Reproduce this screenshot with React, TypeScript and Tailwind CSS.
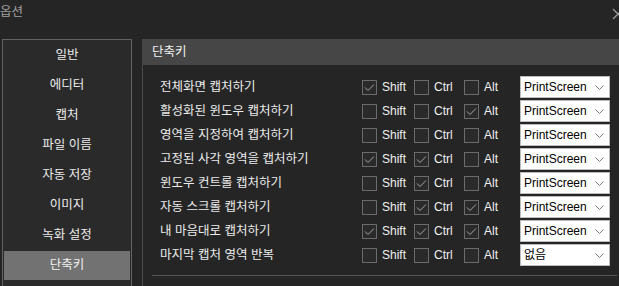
import React from 'react';

const menu = ['일반', '에디터', '캡처', '파일 이름', '자동 저장', '이미지', '녹화 설정', '단축키'];

type Row = { label: string; shift: boolean; ctrl: boolean; alt: boolean; key: string };

const rows: Row[] = [
  { label: '전체화면 캡처하기', shift: true, ctrl: false, alt: false, key: 'PrintScreen' },
  { label: '활성화된 윈도우 캡처하기', shift: false, ctrl: false, alt: true, key: 'PrintScreen' },
  { label: '영역을 지정하여 캡처하기', shift: false, ctrl: false, alt: false, key: 'PrintScreen' },
  { label: '고정된 사각 영역을 캡처하기', shift: true, ctrl: true, alt: false, key: 'PrintScreen' },
  { label: '윈도우 컨트롤 캡처하기', shift: false, ctrl: true, alt: false, key: 'PrintScreen' },
  { label: '자동 스크롤 캡처하기', shift: false, ctrl: true, alt: true, key: 'PrintScreen' },
  { label: '내 마음대로 캡처하기', shift: true, ctrl: true, alt: true, key: 'PrintScreen' },
  { label: '마지막 캡처 영역 반복', shift: false, ctrl: false, alt: false, key: '없음' },
];

function Check({ checked, label, width }: { checked: boolean; label: string; width: string }) {
  return (
    <div className={`flex items-center gap-[5px] ${width}`}>
      <div className="w-[15px] h-[15px] border border-[#6b6b6b] bg-[#2a2a2a] flex items-center justify-center">
        {checked && (
          <svg width="11" height="9" viewBox="0 0 11 9">
            <path d="M1 4.5 L4 7.5 L10 1.5" stroke="#a8a8a8" strokeWidth="1" fill="none" />
          </svg>
        )}
      </div>
      <span className="text-[#f0f0f0]">{label}</span>
    </div>
  );
}

export default function App() {
  return (
    <div className="w-[619px] h-[286px] bg-[#252525] overflow-hidden relative text-[12px] font-['Liberation_Sans','Noto_Sans_CJK_KR',sans-serif]">
      <div className="h-[39px] pt-[3px] text-[#a0a0a0] text-[12.5px] leading-[18px]">옵션</div>
      <svg className="absolute left-[612px] top-[8px]" width="12" height="12" viewBox="0 0 12 12">
        <path d="M1 1 L11 11 M11 1 L1 11" stroke="#9a9a9a" strokeWidth="1.3" fill="none" />
      </svg>

      <div className="flex pl-[2px]">
        <div className="w-[130px] h-[260px] border border-[#626262] bg-[#2a2a2a] p-px flex flex-col gap-px text-[12.5px]">
          {menu.map((m, i) => (
            <div
              key={m}
              className={`h-[29px] flex items-center justify-center ${i === menu.length - 1 ? 'bg-[#727272] text-[#f0f0f0]' : 'text-[#ececec]'}`}
            >
              {m}
            </div>
          ))}
        </div>

        <div className="ml-[10px] flex-1 flex flex-col">
          <div className="h-[26px] bg-[#464646] flex items-center pl-[10px] text-[#f2f2f2] text-[12.5px]">단축키</div>
          <div className="flex-1 border-l border-[#4a4a4a] pt-[10px] pl-[17px] flex flex-col">
            {rows.map((r) => (
              <div key={r.label} className="h-[24px] flex items-center">
                <div className="w-[202px] text-[#ececec] text-[12.5px]">{r.label}</div>
                <Check checked={r.shift} label="Shift" width="w-[52px]" />
                <Check checked={r.ctrl} label="Ctrl" width="w-[50px]" />
                <Check checked={r.alt} label="Alt" width="w-[56px]" />
                <div className="w-[90px] h-[22px] bg-white border border-[#bcbcbc] flex items-center justify-between pl-[3px] pr-[5px] text-black">
                  <span>{r.key}</span>
                  <svg width="9" height="5" viewBox="0 0 9 5">
                    <path d="M0.5 0.5 L4.5 4.5 L8.5 0.5" stroke="#7a7a7a" strokeWidth="1" fill="none" />
                  </svg>
                </div>
              </div>
            ))}
            <div className="mt-[8px] -ml-[8px] mr-[2px] h-px bg-[#555555]" />
          </div>
        </div>
      </div>
    </div>
  );
}
